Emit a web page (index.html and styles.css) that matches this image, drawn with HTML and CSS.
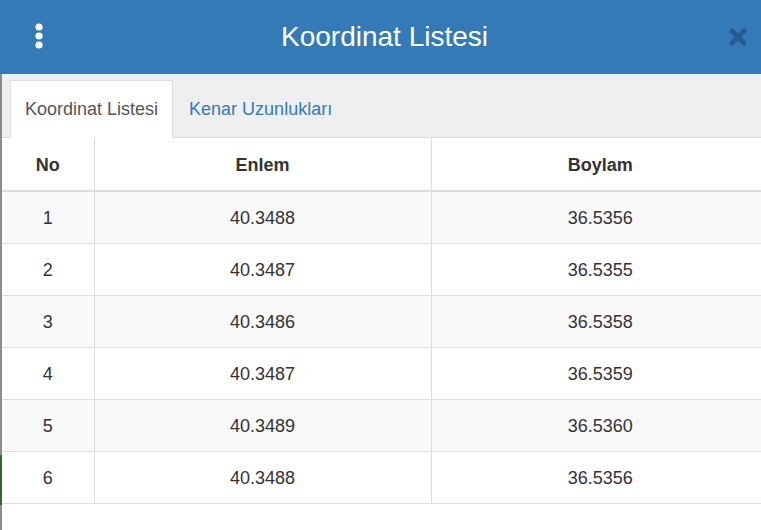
FILE: index.html
```html
<!DOCTYPE html>
<html>
<head>
<meta charset="utf-8">
<link rel="stylesheet" href="styles.css">
</head>
<body>
<div class="modal">
  <div class="modal-header">
    <div class="menu">
      <svg width="10" height="28" viewBox="0 0 10 28"><circle cx="5" cy="5" r="3.6" fill="#fff"/><circle cx="5" cy="14" r="3.6" fill="#fff"/><circle cx="5" cy="23" r="3.6" fill="#fff"/></svg>
    </div>
    <h1 class="title">Koordinat Listesi</h1>
    <div class="close">
      <svg width="20" height="20" viewBox="0 0 20 20"><path d="M4 4 L16 16 M16 4 L4 16" stroke="#245c91" stroke-width="5" stroke-linecap="round"/></svg>
    </div>
  </div>
  <div class="modal-body">
    <div class="edge"></div>
    <div class="content">
      <div class="tabs">
        <div class="tab active">Koordinat Listesi</div>
        <div class="tab">Kenar Uzunlukları</div>
      </div>
      <table class="grid">
        <colgroup><col class="c1"><col class="c2"><col class="c3"></colgroup>
        <thead><tr><th>No</th><th>Enlem</th><th>Boylam</th></tr></thead>
        <tbody>
          <tr><td>1</td><td>40.3488</td><td>36.5356</td></tr>
          <tr><td>2</td><td>40.3487</td><td>36.5355</td></tr>
          <tr><td>3</td><td>40.3486</td><td>36.5358</td></tr>
          <tr><td>4</td><td>40.3487</td><td>36.5359</td></tr>
          <tr><td>5</td><td>40.3489</td><td>36.5360</td></tr>
          <tr><td>6</td><td>40.3488</td><td>36.5356</td></tr>
        </tbody>
      </table>
    </div>
  </div>
</div>
</body>
</html>
```
FILE: styles.css
```css
html, body {
  margin: 0;
  padding: 0;
  background: #fff;
  overflow: hidden;
  font-family: "Liberation Sans", Arial, sans-serif;
  color: #333;
}
.modal {
  width: 769px;
  height: 530px;
  display: flex;
  flex-direction: column;
}
.modal-header {
  height: 74px;
  background: #337ab7;
  display: flex;
  align-items: center;
  position: relative;
}
.menu {
  position: absolute;
  left: 34px;
  top: 22px;
  line-height: 0;
}
.title {
  flex: 1;
  margin: 0;
  text-align: center;
  color: #fff;
  font-weight: normal;
  font-size: 28px;
}
.close {
  position: absolute;
  left: 728px;
  top: 27px;
  line-height: 0;
}
.modal-body {
  flex: 1;
  display: flex;
}
.edge {
  width: 2px;
  background: linear-gradient(to bottom, #8c8c8c 0, #8c8c8c 381px, #2f6a2c 381px, #2f6a2c 431px, #8c8c8c 431px);
}
.content {
  flex: 1;
}
.tabs {
  height: 64px;
  box-sizing: border-box;
  background: #efefef;
  border-bottom: 1px solid #ddd;
  padding: 6px 0 0 8px;
  display: flex;
  align-items: flex-end;
}
.tab {
  box-sizing: border-box;
  padding: 0 15px;
  display: flex;
  align-items: center;
  font-size: 18px;
  color: #337ab7;
  border: 1px solid transparent;
  border-bottom: none;
  margin-bottom: -1px;
  height: 58px;
}
.tab.active {
  background: #fff;
  color: #555;
  border-color: #ddd;
  padding: 0 14px;
}
.grid {
  width: 767px;
  border-collapse: collapse;
  font-size: 18px;
}
.c1 { width: 92px; }
.c2 { width: 337px; }
.grid th, .grid td {
  text-align: center;
  padding: 0;
  border-left: 1px solid #ddd;
}
.grid th:first-child, .grid td:first-child {
  border-left: none;
}
.grid th {
  font-weight: bold;
  border-bottom: 2px solid #ddd;
  height: 49px;
  padding-top: 3px;
  vertical-align: middle;
}
.grid td {
  border-top: 1px solid #ddd;
  height: 49px;
  padding-top: 2px;
}
.grid tbody tr:last-child td {
  border-bottom: 1px solid #ddd;
}
.grid tbody tr:nth-child(odd) {
  background: #f9f9f9;
}
```
